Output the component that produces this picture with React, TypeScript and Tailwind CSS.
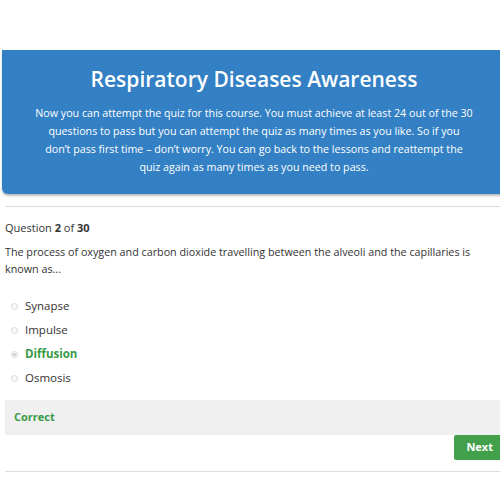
import { useState } from "react";

const options = ["Synapse", "Impulse", "Diffusion", "Osmosis"];

export default function App() {
  const [selected] = useState("Diffusion");

  return (
    <div className="w-[500px] h-[500px] overflow-hidden bg-white text-[#333] font-['Open_Sans',sans-serif]">
      <div className="w-[506px] pt-[50px]">
        {/* Header */}
        <div className="ml-[2px] bg-[#3380c4] rounded-bl-[6px] shadow-[0_2px_2px_rgba(0,0,0,0.25)] px-6 pt-[14px] pb-[18px] text-center text-white">
          <h1 className="text-[21px] font-semibold leading-[30px]">Respiratory Diseases Awareness</h1>
          <p className="mt-[10px] text-[10.7px] leading-[18px]">
            Now you can attempt the quiz for this course. You must achieve at least 24 out of the 30
            <br />
            questions to pass but you can attempt the quiz as many times as you like. So if you
            <br />
            don’t pass first time – don’t worry. You can go back to the lessons and reattempt the
            <br />
            quiz again as many times as you need to pass.
          </p>
        </div>

        <div className="ml-[5px] mt-[12px] border-t border-[#dcdcdc]" />

        {/* Question */}
        <div className="ml-[5px] pr-2">
          <p className="mt-[12px] text-[11px] leading-[18px]">
            Question <span className="font-bold">2</span> of <span className="font-bold">30</span>
          </p>
          <p className="mt-[7px] text-[10.75px] leading-[17px] pr-[10px]">
            The process of oxygen and carbon dioxide travelling between the alveoli and the capillaries is
            <br />
            known as...
          </p>

          <ul className="mt-[16px] flex flex-col">
            {options.map((o) => (
              <li key={o} className="flex items-center h-[24px] pl-[6px]">
                <span className="w-[7px] h-[7px] rounded-full border border-[#d8d8d8] bg-[#f8f8f8] flex items-center justify-center">
                  {o === selected && <span className="w-[3px] h-[3px] rounded-full bg-[#c8c8c8]" />}
                </span>
                <span
                  className={`ml-[7px] text-[11.5px] ${o === selected ? "font-bold text-[#3a9a48]" : ""}`}
                >
                  {o}
                </span>
              </li>
            ))}
          </ul>
        </div>

        {/* Feedback */}
        <div className="ml-[5px] mt-[10px] h-[35px] bg-[#f0f0f0] flex items-center px-[9px]">
          <span className="text-[11px] font-bold text-[#3a9a48]">Correct</span>
        </div>

        <div className="ml-[5px] flex justify-end">
          <button className="mr-[1px] h-[25px] px-[12px] bg-[#42a04b] text-white text-[11px] font-bold rounded-[2px]">
            Next
          </button>
        </div>

        <div className="ml-[5px] mt-[11px] border-t border-[#dcdcdc]" />
      </div>
    </div>
  );
}
